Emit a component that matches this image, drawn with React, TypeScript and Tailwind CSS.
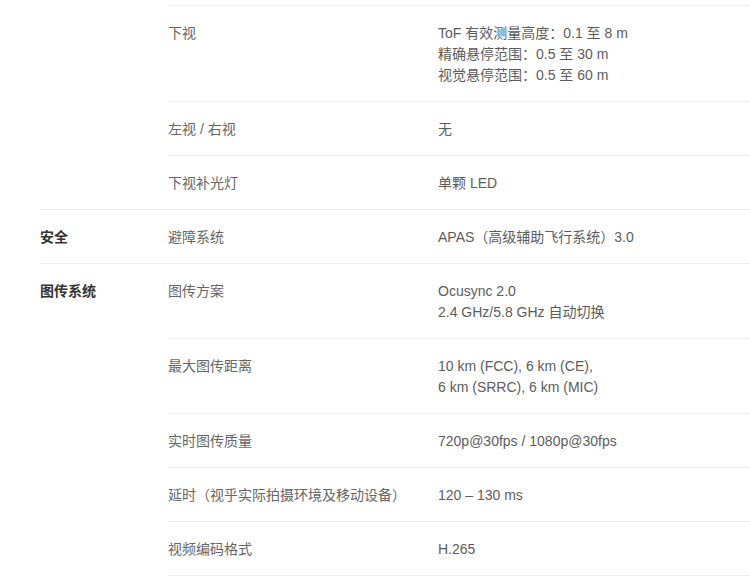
const groups = [
  {
    title: "",
    divider: false,
    rows: [
      ["下视", ["ToF 有效测量高度：0.1 至 8 m", "精确悬停范围：0.5 至 30 m", "视觉悬停范围：0.5 至 60 m"]],
      ["左视 / 右视", ["无"]],
      ["下视补光灯", ["单颗 LED"]],
    ],
  },
  {
    title: "安全",
    divider: true,
    rows: [["避障系统", ["APAS（高级辅助飞行系统）3.0"]]],
  },
  {
    title: "图传系统",
    divider: true,
    rows: [
      ["图传方案", ["Ocusync 2.0", "2.4 GHz/5.8 GHz 自动切换"]],
      ["最大图传距离", ["10 km (FCC), 6 km (CE),", "6 km (SRRC), 6 km (MIC)"]],
      ["实时图传质量", ["720p@30fps / 1080p@30fps"]],
      ["延时（视乎实际拍摄环境及移动设备）", ["120 – 130 ms"]],
      ["视频编码格式", ["H.265"]],
    ],
  },
] as const;

export default function App() {
  return (
    <div
      className="min-h-screen bg-white pl-10 pt-[5px] text-[14px] leading-[21px]"
      style={{ fontFamily: '"Liberation Sans", "Noto Sans CJK SC", sans-serif' }}
    >
      {groups.map((group, gi) => (
        <div key={gi} className={`flex ${group.divider ? "border-t border-[#eeeeee]" : ""}`}>
          <div className="w-[128px] shrink-0 pt-[17px] pb-[15px] font-bold text-[#333333]">{group.title}</div>
          <div className="flex-1">
            {group.rows.map(([label, values], ri) => (
              <div
                key={label}
                className={`flex pt-[17px] pb-[15px] ${ri === 0 && group.divider ? "" : "border-t border-[#eeeeee]"}`}
              >
                <div className="w-[270px] shrink-0 text-[#666666]">{label}</div>
                <div className="flex-1 text-[#5c5c5c]">
                  {values.map((v) => (
                    <div key={v}>{v}</div>
                  ))}
                </div>
              </div>
            ))}
          </div>
        </div>
      ))}
      <div className="ml-[128px] border-t border-[#eeeeee]" />
    </div>
  );
}
